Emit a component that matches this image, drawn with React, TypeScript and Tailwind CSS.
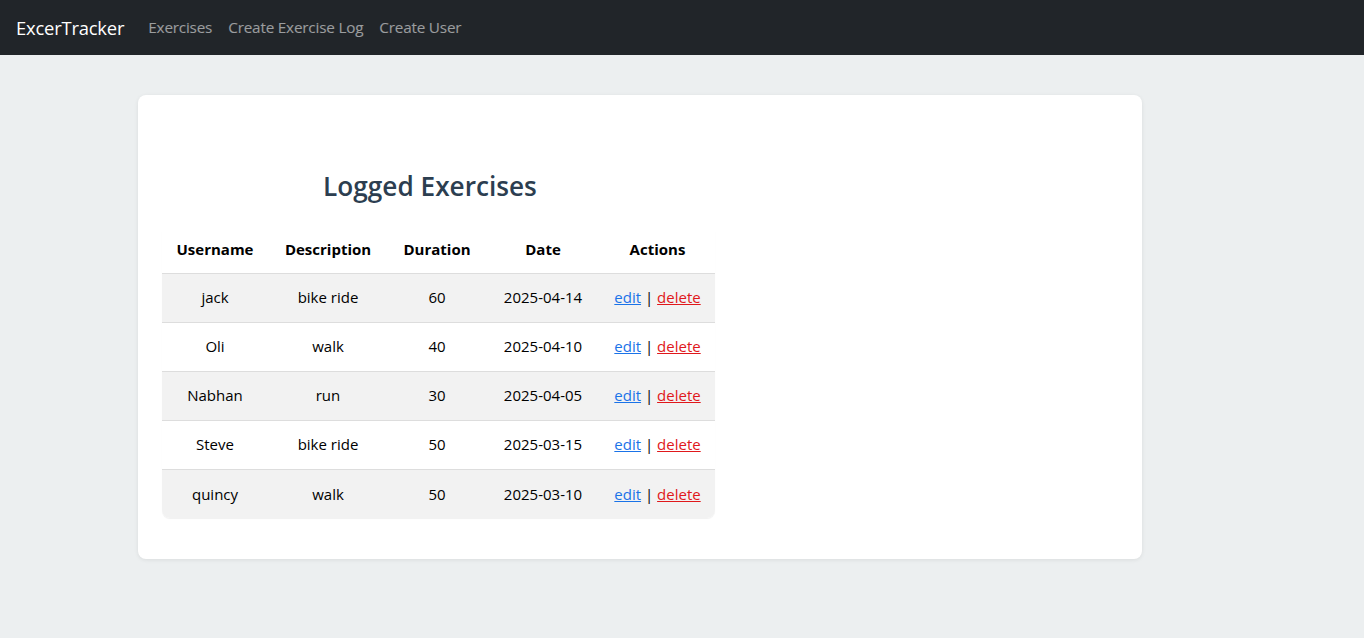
import React from "react";

type Exercise = {
  username: string;
  description: string;
  duration: number;
  date: string;
};

const exercises: Exercise[] = [
  { username: "jack", description: "bike ride", duration: 60, date: "2025-04-14" },
  { username: "Oli", description: "walk", duration: 40, date: "2025-04-10" },
  { username: "Nabhan", description: "run", duration: 30, date: "2025-04-05" },
  { username: "Steve", description: "bike ride", duration: 50, date: "2025-03-15" },
  { username: "quincy", description: "walk", duration: 50, date: "2025-03-10" },
];

const font = "font-['Open_Sans','Noto_Sans',sans-serif]";

function Navbar() {
  return (
    <nav className="h-[55px] bg-[#212529] flex items-center px-4">
      <span className="text-[18.4px] text-white mr-4 tracking-[-0.2px]">ExcerTracker</span>
      <ul className="flex items-center">
        {["Exercises", "Create Exercise Log", "Create User"].map((l) => (
          <li key={l}>
            <a href="#" className="block px-2 text-[15.3px] text-white/55 tracking-[-0.2px]">
              {l}
            </a>
          </li>
        ))}
      </ul>
    </nav>
  );
}

export default function App() {
  return (
    <div className={clsx(font, "min-h-[638px] bg-[#eceff0]")}>
      <Navbar />
      <main className="pt-10 pl-[138px]">
        <div className="w-[1004px] h-[464px] bg-white rounded-lg shadow-[0_1px_4px_rgba(0,0,0,0.08)] px-6 pt-[72px]">
          <div className="w-[553px]">
            <h2 className="text-[26.2px] font-semibold text-[#2c3e50] text-center pr-[17px] mb-5 leading-[38px]">
              Logged Exercises
            </h2>
            <table className="w-[553px] table-fixed border-collapse rounded-lg overflow-hidden text-[15px] text-black shadow-[0_1px_1px_rgba(0,0,0,0.06)]">
              <colgroup>
                <col className="w-[106px]" />
                <col className="w-[120px]" />
                <col className="w-[98px]" />
                <col className="w-[114px]" />
                <col className="w-[115px]" />
              </colgroup>
              <thead>
                <tr className="h-12 border-b border-[#dddddd] bg-white">
                  <th className="font-bold">Username</th>
                  <th className="font-bold">Description</th>
                  <th className="font-bold">Duration</th>
                  <th className="font-bold">Date</th>
                  <th className="font-bold">Actions</th>
                </tr>
              </thead>
              <tbody>
                {exercises.map((e, i) => (
                  <tr
                    key={e.username}
                    className={clsx(
                      "h-[49px] text-center",
                      i % 2 === 0 ? "bg-[#f2f2f2]" : "bg-white",
                      i < exercises.length - 1 && "border-b border-[#dddddd]"
                    )}
                  >
                    <td>{e.username}</td>
                    <td>{e.description}</td>
                    <td>{e.duration}</td>
                    <td>{e.date}</td>
                    <td className="whitespace-nowrap">
                      <a href="#" className="text-[#1a73e8] underline">edit</a>
                      {" | "}
                      <a href="#" className="text-[#e0181b] underline">delete</a>
                    </td>
                  </tr>
                ))}
              </tbody>
            </table>
          </div>
        </div>
      </main>
    </div>
  );
}

function clsx(...args: (string | false | undefined)[]) {
  return args.filter(Boolean).join(" ");
}
